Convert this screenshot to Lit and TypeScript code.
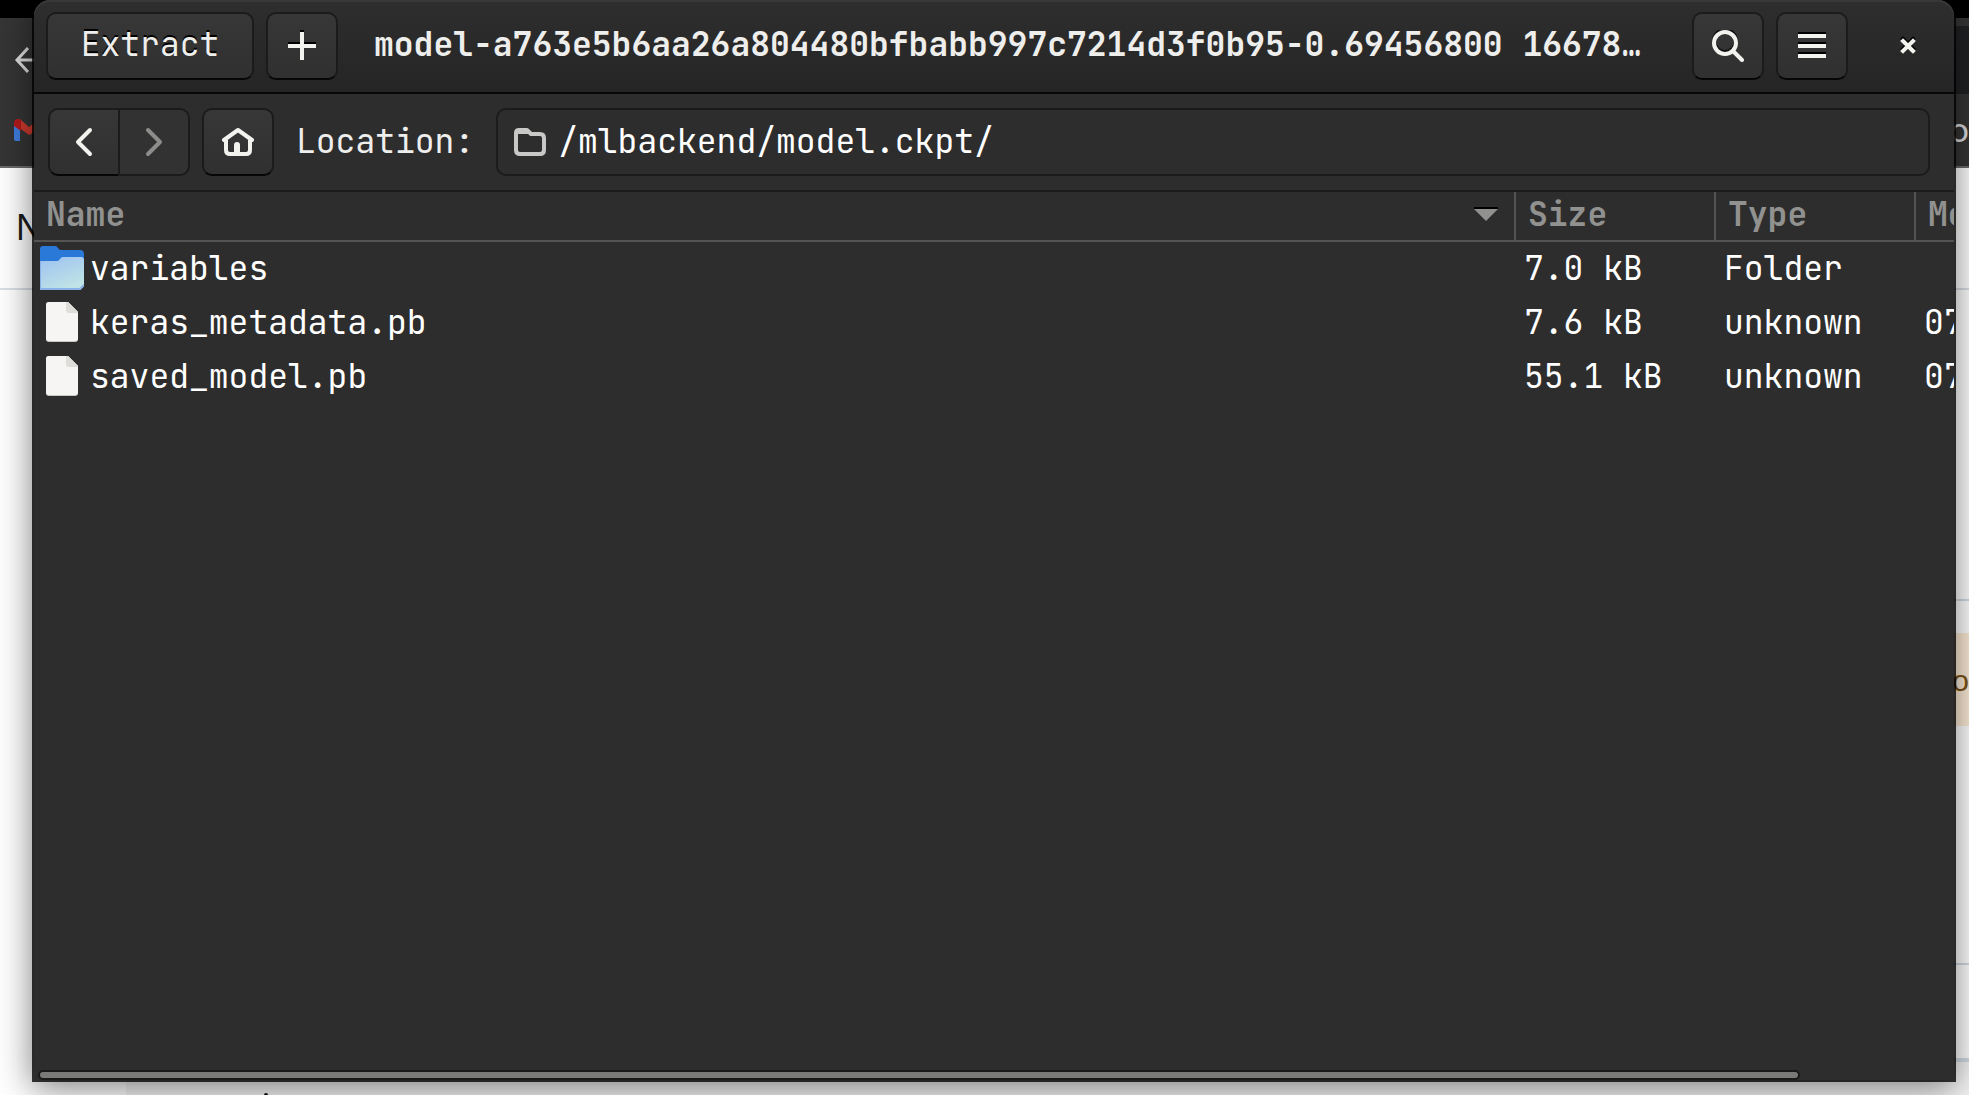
import { LitElement, html, svg, css } from "lit";
import { customElement, state } from "lit/decorators.js";

type Entry = { name: string; size: string; type: string; modified: string; folder?: boolean };

const ENTRIES: Entry[] = [
  { name: "variables", size: "7.0 kB", type: "Folder", modified: "", folder: true },
  { name: "keras_metadata.pb", size: "7.6 kB", type: "unknown", modified: "07" },
  { name: "saved_model.pb", size: "55.1 kB", type: "unknown", modified: "07" },
];

const icon = (body: unknown) =>
  html`<svg width="32" height="32" viewBox="0 0 32 32" fill="none" aria-hidden="true">${body}</svg>`;

const plusIcon = icon(svg`
  <path d="M14 1h4M2 13h28" stroke="#000" stroke-width="2"/>
  <path d="M16 2v28M2 16h28" stroke="#f2f2ef" stroke-width="4"/>`);
const searchIcon = icon(svg`
  <circle cx="13" cy="11" r="11" stroke="#111" stroke-width="4"/>
  <circle cx="13" cy="13" r="11" stroke="#f2f2ef" stroke-width="4"/>
  <path d="M21 21l9 9" stroke="#f2f2ef" stroke-width="4" stroke-linecap="round"/>`);
const menuIcon = icon(svg`
  <path d="M2 3h28M2 13h28M2 23h28" stroke="#000" stroke-width="2"/>
  <path d="M2 6h28M2 16h28M2 26h28" stroke="#f2f2ef" stroke-width="4"/>`);
const closeIcon = icon(svg`
  <path d="M11 9l10 10M21 9L11 19" stroke="#000" stroke-width="4" stroke-linecap="square"/>
  <path d="M11 11l10 10M21 11L11 21" stroke="#f2f2ef" stroke-width="4" stroke-linecap="square"/>`);
const backIcon = icon(svg`<path d="M22 4L10 16l12 12" stroke="#f2f2ef" stroke-width="4" stroke-linecap="round" stroke-linejoin="round"/>`);
const forwardIcon = icon(svg`<path d="M10 4l12 12-12 12" stroke="#8d8d8b" stroke-width="4" stroke-linecap="round" stroke-linejoin="round"/>`);
const homeIcon = icon(svg`
  <path d="M2 14L16 4l14 10" stroke="#f2f2ef" stroke-width="4" stroke-linecap="round" stroke-linejoin="round"/>
  <path d="M4 14v10q0 4 4 4h16q4 0 4-4V14" stroke="#f2f2ef" stroke-width="4"/>
  <path d="M12 28V19q0-3 3-3t3 3v9z" fill="#f2f2ef"/>`);
const placeIcon = icon(svg`
  <path d="M2 7q0-3 3-3h8l4 4h9q4 0 4 4v12q0 4-4 4H6q-4 0-4-4z" stroke="#c8c8c6" stroke-width="4" stroke-linejoin="round"/>
  <path d="M3 7h13" stroke="#c8c8c6" stroke-width="2"/>`);
const folderIcon = html`<svg width="44" height="44" viewBox="0 0 44 44" aria-hidden="true">
  <defs>
    <linearGradient id="face" x1="0" y1="0" x2="0.5" y2="1">
      <stop offset="0" stop-color="#9dc1f1" /><stop offset="1" stop-color="#bfe3e6" />
    </linearGradient>
  </defs>
  <path d="M0 3q0-3 3-3h12q2 0 3 2t3 2h19q4 0 4 4v10H0z" fill="#2a78d8" />
  <path d="M0 15h17q2 0 3-2t3-2h18q3 0 3 3v26l-4 4H0z" fill="url(#face)" />
  <path d="M0 44V15M0 43h40l4-4" stroke="#8ab2e8" stroke-width="2" fill="none" />
</svg>`;
const fileIcon = html`<svg width="32" height="42" viewBox="0 0 32 42" aria-hidden="true">
  <path d="M3 1h19l10 10v27q0 3-3 3H3q-3 0-3-3V4q0-3 3-3z" fill="#c9c9c4" />
  <path d="M3 1h19l10 10v26q0 3-3 3H3q-3 0-3-3V4q0-3 3-3z" fill="#f6f5f4" />
  <path d="M20 1h2l10 10v1h-9q-3 0-3-3z" fill="#deddda" />
</svg>`;

@customElement("desktop-backdrop")
export class DesktopBackdrop extends LitElement {
  static styles = css`
    :host {
      display: grid;
      grid-template-rows: 18px 150px 122px auto 1fr;
      height: 100%;
      overflow: hidden;
      background: #fff;
      color: #1c1c1c;
    }
    * { box-sizing: border-box; }
    .panel { background: #000; }
    .chrome {
      display: grid;
      grid-template-columns: 1fr 1fr;
      background: #353535;
      border-bottom: 2px solid #6a6a6a;
    }
    .tools { display: flex; flex-direction: column; gap: 44px; padding: 28px 0 0 14px; }
    .tools svg { display: block; }
    .tabs { display: flex; flex-direction: column; align-items: flex-end; padding-top: 8px; }
    .strip { align-self: stretch; height: 68px; background: #202124; }
    .bookmark { font: 34px/72px Roboto, sans-serif; color: #dadce0; }
    .heading { border-bottom: 2px solid #dadfe5; font: 36px/120px "Liberation Sans", sans-serif; padding-left: 16px; }
    .body { margin-left: 50%; display: grid; grid-template-rows: 311px 32px 93px 239px 93px 4px; }
    .rule { border-bottom: 2px solid #d3dce4; }
    .notice { background: #fdecd6; color: #7a5214; font: 30px/96px "Liberation Sans", sans-serif; text-align: right; }
    .bar { background: #d3dce4; }
    .foot { margin-left: 126px; padding: 31px 0 0 138px; background: #f4f4f4; }
    .dot { width: 4px; height: 4px; border-radius: 2px; background: #111; }
  `;

  render() {
    return html`
      <div class="panel"></div>
      <div class="chrome">
        <div class="tools">
          <svg width="30" height="28" viewBox="0 0 30 28" fill="none"><path d="M14 2L3 14l11 12M3 14h27" stroke="#dedede" stroke-width="3" /></svg>
          <svg width="34" height="24" viewBox="0 0 34 24">
            <path d="M0 5h6v18H2q-2 0-2-2z" fill="#3f7de0" />
            <path d="M26 5h6v16q0 2-2 2h-4z" fill="#34a853" />
            <path d="M2 2q2-2 5 0l8 7 9-7q4-2 6 0v7l-15 8L3 8z" fill="#cf3a2f" />
            <path d="M0 8V5q0-4 4-4l3 1v11z" fill="#b3191c" />
          </svg>
        </div>
        <div class="tabs"><div class="strip"></div><span class="bookmark">o</span></div>
      </div>
      <div class="heading">N</div>
      <div class="body">
        <div class="rule"></div>
        <div></div>
        <div class="notice">o</div>
        <div class="rule"></div>
        <div></div>
        <div class="bar"></div>
      </div>
      <div class="foot"><div class="dot"></div></div>
    `;
  }
}

@customElement("archive-window")
export class ArchiveWindow extends LitElement {
  @state() private path = "/mlbackend/model.ckpt/";

  static styles = css`
    :host {
      display: flex;
      flex-direction: column;
      background: #2d2d2d;
      border-radius: 16px 16px 0 0;
      box-shadow: 0 0 0 2px rgba(0, 0, 0, 0.78), 0 6px 34px 2px rgba(0, 0, 0, 0.5);
      font: 33px/44px "JetBrains Mono", "DejaVu Sans Mono", monospace;
      color: #fff;
      min-width: 0;
    }
    * { box-sizing: border-box; }
    svg { display: block; flex: none; }
    button {
      display: grid;
      place-items: center;
      height: 68px;
      min-width: 72px;
      padding: 0;
      border: 2px solid #1b1b1b;
      border-bottom-color: #060606;
      border-radius: 10px;
      background: linear-gradient(#373737, #303030);
      color: #eeeeec;
      font: inherit;
    }
    .header {
      display: flex;
      align-items: center;
      gap: 12px;
      height: 94px;
      padding: 0 12px;
      border-bottom: 2px solid #070707;
      border-radius: 16px 16px 0 0;
      box-shadow: inset 0 2px #383838;
      background: linear-gradient(#2e2e2e, #252525);
    }
    .extract { min-width: 208px; padding-bottom: 4px; text-shadow: 0 -2px #000; }
    .title {
      flex: 1;
      min-width: 0;
      margin: 0 0 0 24px;
      padding-bottom: 4px;
      overflow: hidden;
      white-space: nowrap;
      text-overflow: ellipsis;
      color: #eeeeec;
    }
    .close { min-width: 68px; margin-left: 14px; border-color: transparent; background: none; }
    .toolbar {
      display: flex;
      align-items: center;
      gap: 12px;
      height: 98px;
      padding: 0 24px 0 14px;
      border-bottom: 2px solid #1b1b1b;
    }
    .history { display: flex; }
    .back { border-radius: 10px 0 0 10px; border-right: 0; min-width: 70px; }
    .forward { border-radius: 0 10px 10px 0; border-bottom-color: #1b1b1b; background: #323232; }
    .location { margin: 0 10px; padding-bottom: 2px; color: #eeeeec; }
    .entry {
      flex: 1;
      min-width: 0;
      display: flex;
      align-items: center;
      gap: 12px;
      height: 68px;
      padding: 0 16px;
      border: 2px solid #1b1b1b;
      border-radius: 10px;
    }
    .entry input { flex: 1; min-width: 0; padding: 0 0 2px; border: 0; outline: 0; background: none; color: #fff; font: inherit; }
    .list { flex: 1; overflow: hidden; }
    table { width: 100%; table-layout: fixed; border-collapse: separate; border-spacing: 0; }
    .num, .kind { width: 200px; }
    .mod { width: 38px; }
    th {
      height: 50px;
      padding: 0 0 4px 12px;
      border-right: 2px solid #545454;
      border-bottom: 2px solid #545454;
      text-align: left;
      color: #919190;
      overflow: hidden;
      white-space: nowrap;
    }
    th:last-child { border-right: 0; }
    .sort { display: flex; align-items: center; justify-content: space-between; padding-right: 16px; }
    td { height: 54px; padding: 0 0 2px 8px; overflow: hidden; white-space: nowrap; }
    .file { display: flex; align-items: center; gap: 6px; }
    .thumb { display: grid; place-items: center; width: 44px; }
    .first { padding-left: 6px; }
    .scroll { height: 10px; margin: 0 154px 0 4px; border: 2px solid #1a1a1a; border-radius: 5px; background: #7a7a78; }
  `;

  render() {
    return html`
      <header class="header">
        <button class="extract">Extract</button>
        <button aria-label="Add files">${plusIcon}</button>
        <b class="title">model-a763e5b6aa26a804480bfbabb997c7214d3f0b95-0.69456800 16678…</b>
        <button aria-label="Search">${searchIcon}</button>
        <button aria-label="Menu">${menuIcon}</button>
        <button class="close" aria-label="Close">${closeIcon}</button>
      </header>
      <div class="toolbar">
        <div class="history">
          <button class="back" aria-label="Back">${backIcon}</button>
          <button class="forward" aria-label="Forward" disabled>${forwardIcon}</button>
        </div>
        <button aria-label="Home">${homeIcon}</button>
        <label class="location" for="path">Location:</label>
        <div class="entry">${placeIcon}<input id="path" .value=${this.path} /></div>
      </div>
      <div class="list">
        <table>
          <colgroup><col /><col class="num" /><col class="kind" /><col class="mod" /></colgroup>
          <thead>
            <tr>
              <th>
                <div class="sort">Name
                  <svg width="24" height="14" viewBox="0 0 24 14"><path d="M0 0h24v2H0z" fill="#000" /><path d="M0 2h24L12 14z" fill="#919190" /></svg>
                </div>
              </th>
              <th>Size</th><th>Type</th><th>Mo</th>
            </tr>
          </thead>
          <tbody>
            ${ENTRIES.map((e) => html`
              <tr>
                <td class="first"><div class="file"><span class="thumb">${e.folder ? folderIcon : fileIcon}</span>${e.name}</div></td>
                <td>${e.size}</td><td>${e.type}</td><td>${e.modified}</td>
              </tr>`)}
          </tbody>
        </table>
      </div>
      <div class="scroll"></div>
    `;
  }
}

@customElement("app-root")
export class AppRoot extends LitElement {
  static styles = css`
    :host { display: grid; height: 100vh; overflow: hidden; }
    desktop-backdrop, archive-window { grid-area: 1 / 1; min-height: 0; }
    archive-window { z-index: 1; margin: 0 15px 15px 34px; }
  `;

  render() {
    return html`<desktop-backdrop></desktop-backdrop><archive-window></archive-window>`;
  }
}
